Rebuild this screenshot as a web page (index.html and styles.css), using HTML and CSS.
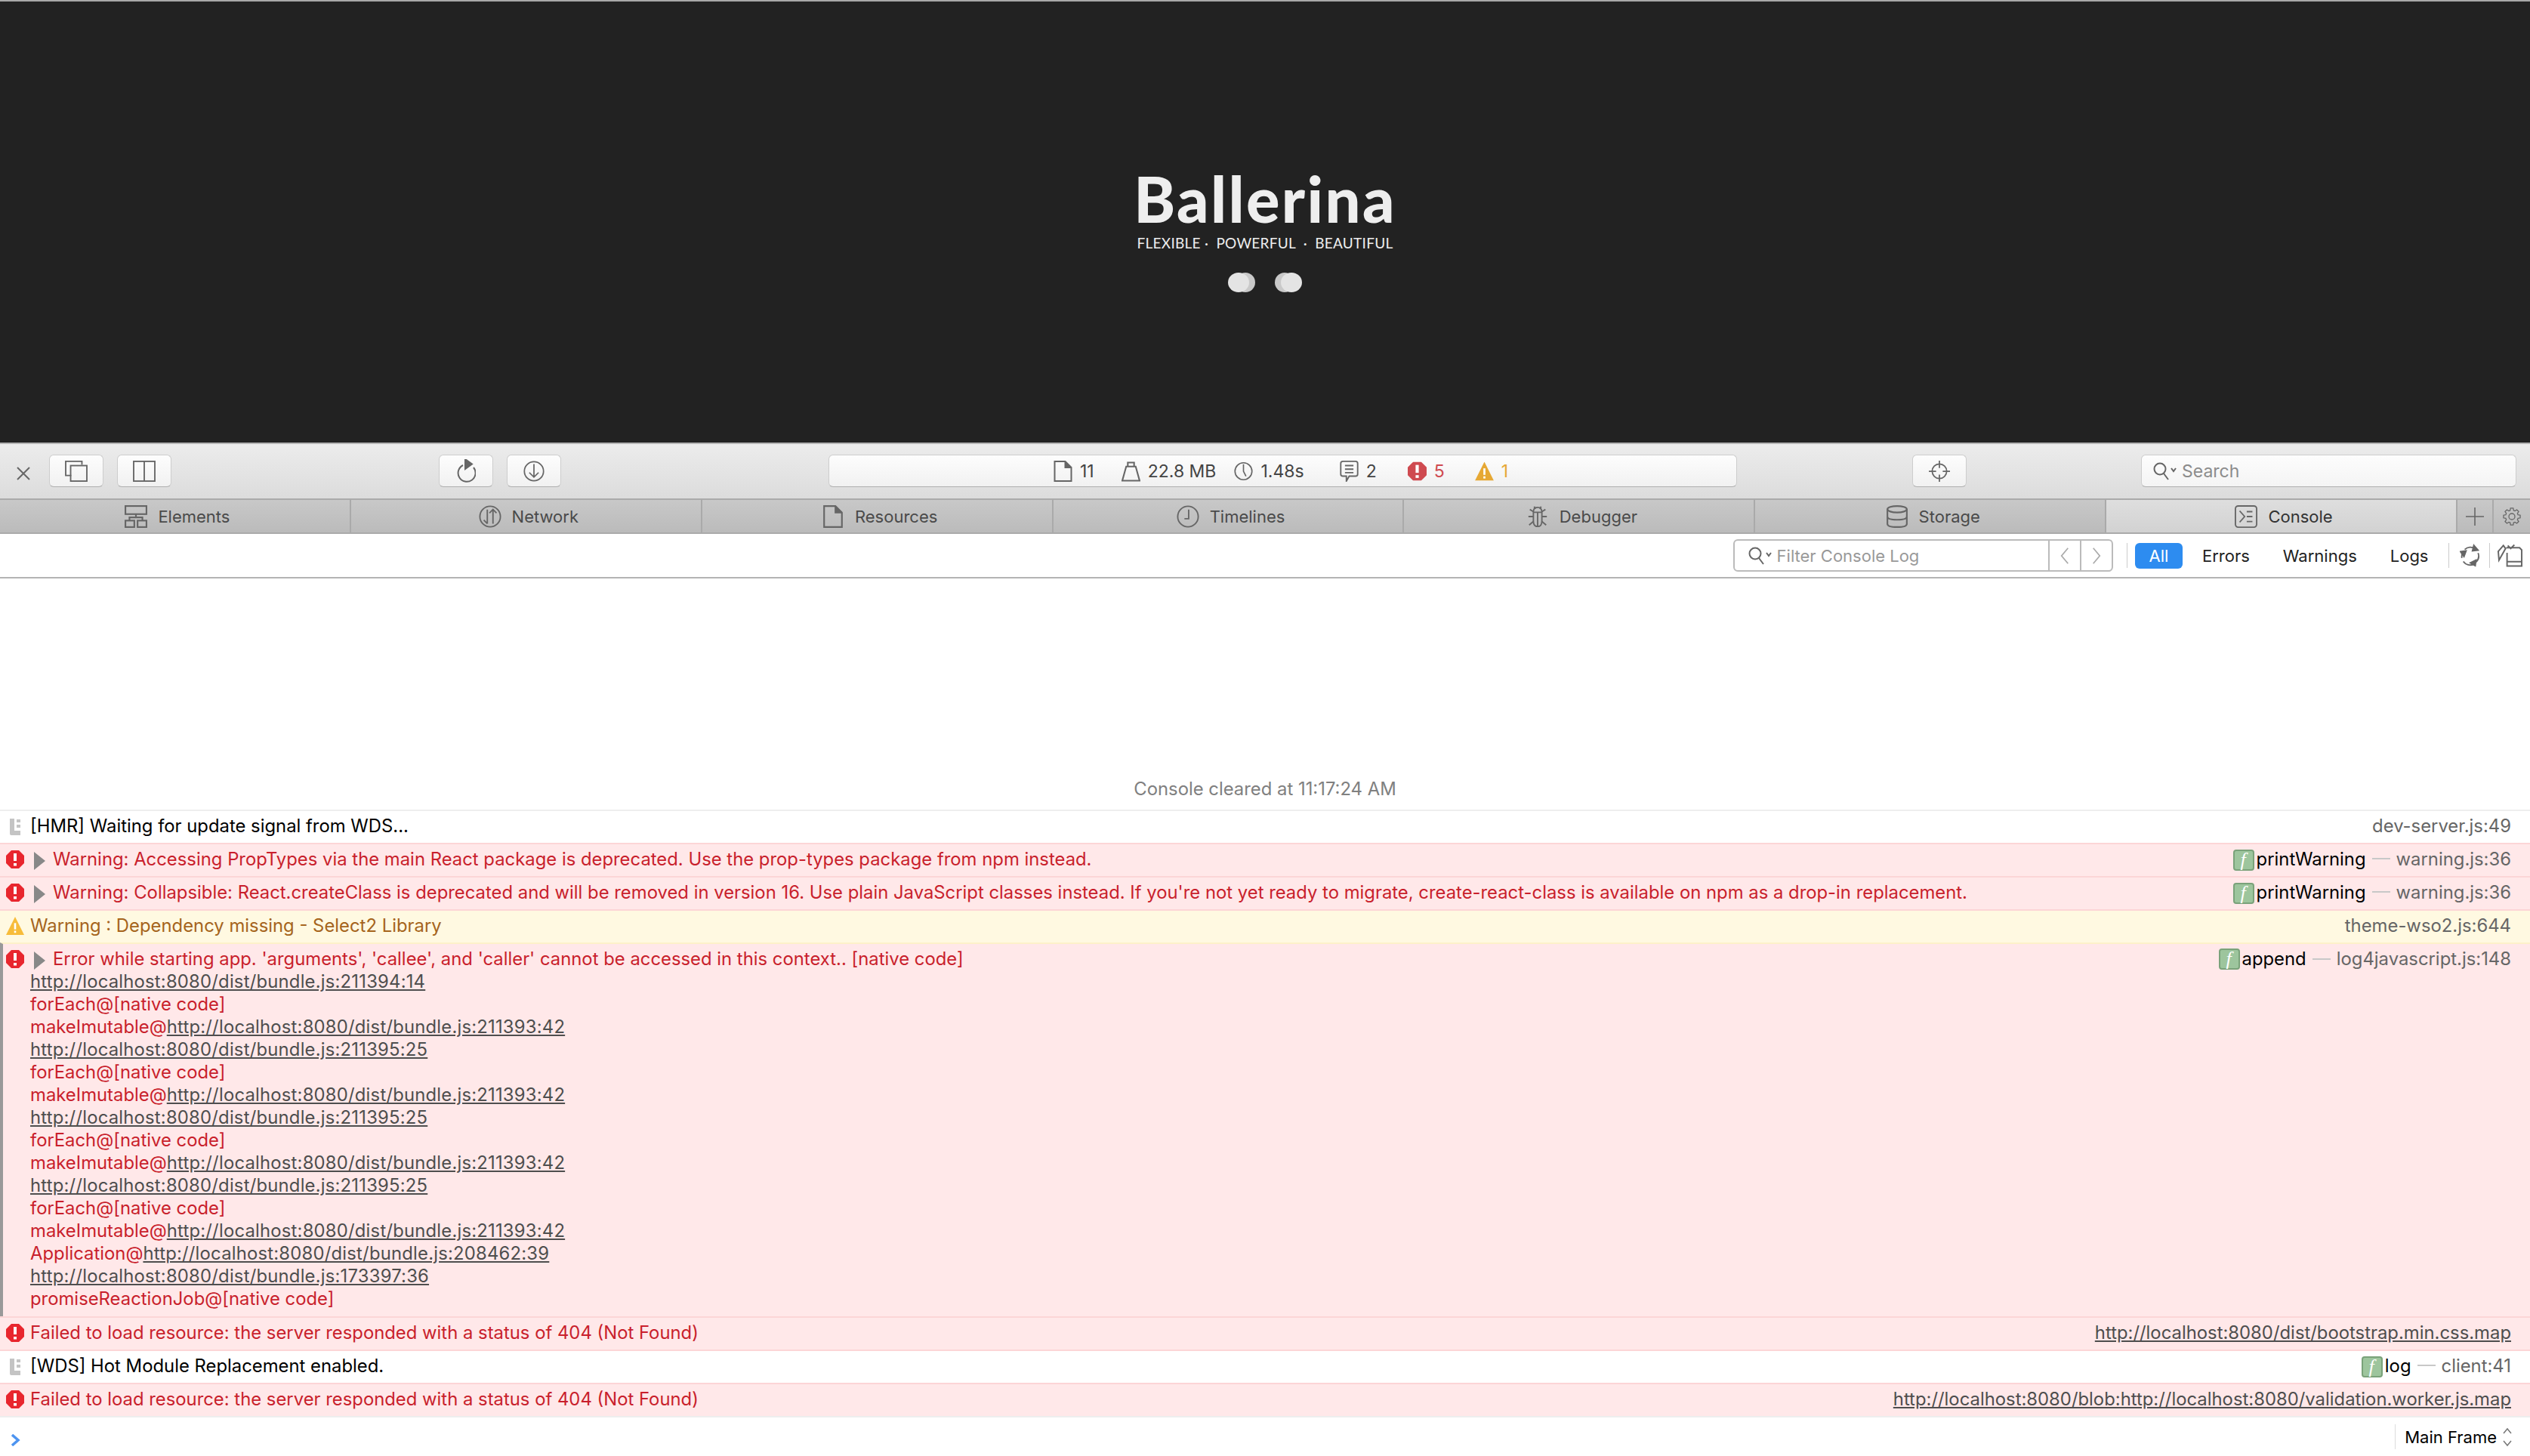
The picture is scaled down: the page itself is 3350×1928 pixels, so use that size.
FILE: index.html
```html
<!DOCTYPE html>
<html lang="en">
<head>
  <meta charset="UTF-8">
  <title>Ballerina - Web Inspector</title>
  <link rel="stylesheet" href="styles.css">
</head>
<body>
  <svg class="defs" width="0" height="0">
    <symbol id="i-err" viewBox="0 0 24 24">
      <polygon points="7,0 17,0 24,7 24,17 17,24 7,24 0,17 0,7" fill="currentColor"/>
      <rect x="10" y="4" width="4" height="10" fill="#fff"/>
      <rect x="10" y="17" width="4" height="3.5" fill="#fff"/>
    </symbol>
    <symbol id="i-warn" viewBox="0 0 26 26">
      <path d="M13 0 L26 26 L0 26 Z" fill="currentColor"/>
      <rect x="11.6" y="9" width="2.8" height="9" fill="#fff"/>
      <rect x="11.6" y="20" width="2.8" height="3" fill="#fff"/>
    </symbol>
    <symbol id="i-log" viewBox="0 0 14 22">
      <path d="M0 0 H6 V16 H14 V22 H2 Q0 22 0 20 Z" fill="#c4c4c4"/>
      <rect x="9" y="1" width="5" height="4" fill="#c4c4c4"/>
      <rect x="9" y="8" width="5" height="4" fill="#c4c4c4"/>
    </symbol>
    <symbol id="i-tri" viewBox="0 0 15 24">
      <path d="M0 0 L15 12 L0 24 Z" fill="#888"/>
    </symbol>
    <symbol id="i-search" viewBox="0 0 32 24">
      <circle cx="9" cy="9" r="7.5" fill="none" stroke="#666" stroke-width="2"/>
      <path d="M14 15 L20 23 M24 8 L27 12 L30 8" fill="none" stroke="#666" stroke-width="2"/>
    </symbol>
  </svg>

  <div class="hero">
    <div class="logo">Ballerina</div>
    <div class="tagline">FLEXIBLE &middot;&nbsp; POWERFUL &nbsp;&middot;&nbsp; BEAUTIFUL</div>
    <div class="dots">
      <span class="dot dot-a"></span>
      <span class="dot dot-b"></span>
    </div>
  </div>

  <div class="toolbar">
    <svg class="close-x ico" viewBox="0 0 18 18"><path d="M1 1 L17 17 M17 1 L1 17"/></svg>
    <button class="tbtn"><svg class="ico" viewBox="0 0 32 30"><path d="M9 21 H1 V1 H24 V6"/><rect x="8" y="7" width="23" height="22"/></svg></button>
    <button class="tbtn"><svg class="ico" viewBox="0 0 32 30"><rect x="1" y="1" width="30" height="28"/><path d="M16 1 V29"/></svg></button>
    <button class="tbtn group-gap"><svg class="ico reload" viewBox="0 0 26 31"><path d="M9 8 A11.5 11.5 0 1 0 23 11"/><path d="M12 0 L21 6.5 L12 13 Z" class="solid"/></svg></button>
    <button class="tbtn"><svg class="ico" viewBox="0 0 32 32"><circle cx="16" cy="16" r="14.5"/><path d="M16 5 V25 M9 18 L16 25 L23 18"/></svg></button>

    <div class="activity">
      <span class="stat"><svg class="ico" viewBox="0 0 24 28"><path d="M1 1 H15 L23 9 V27 H1 Z"/><path d="M15 1 V9 H23" class="solid"/></svg>11</span>
      <span class="stat stat-mem"><svg class="ico" viewBox="0 0 24 26"><path d="M6 7 H18 L23 25 H1 Z"/><path d="M8 7 V2 H16 V7"/></svg>22.8 MB</span>
      <span class="stat stat-time"><svg class="ico" viewBox="0 0 30 30"><circle cx="15" cy="15" r="13.5"/><path d="M15 4 L15 15 L19 23"/></svg>1.48s</span>
      <span class="stat stat-msg"><svg class="ico" viewBox="0 0 26 30"><path d="M4 1 H22 Q25 1 25 4 V19 Q25 22 22 22 H13 L9 29 L9 22 H4 Q1 22 1 19 V4 Q1 1 4 1 Z"/><path d="M7 7 H19 M7 12 H19 M7 17 H19"/></svg>2</span>
      <span class="stat stat-err"><svg class="stat-glyph" viewBox="0 0 24 24"><use href="#i-err"/></svg>5</span>
      <span class="stat stat-warn"><svg class="stat-glyph" viewBox="0 0 26 26"><use href="#i-warn"/></svg>1</span>
    </div>

    <button class="tbtn target-btn"><svg class="ico" viewBox="0 0 32 32"><circle cx="16" cy="16" r="11"/><path d="M16 0 V11 M16 21 V32 M0 16 H11 M21 16 H32"/></svg></button>

    <div class="search"><svg class="search-ico"><use href="#i-search"/></svg>Search</div>
  </div>

  <div class="tabs">
    <div class="tab"><svg class="ico" viewBox="0 0 28 28"><rect x="1" y="1" width="26" height="10"/><rect x="1" y="19" width="11" height="8"/><rect x="16" y="19" width="11" height="8"/><path d="M14 11 V15 M6 19 V15 H22 V19"/></svg>Elements</div>
    <div class="tab"><svg class="ico" viewBox="0 0 32 32"><circle cx="16" cy="16" r="14.5"/><path d="M12 6 V26 M7 21 L12 26 M20 26 V6 M15 11 L20 6 L25 11"/></svg>Network</div>
    <div class="tab"><svg class="ico" viewBox="0 0 24 28"><path d="M1 1 H15 L23 9 V27 H1 Z"/><path d="M15 1 V9 H23" class="solid"/></svg>Resources</div>
    <div class="tab"><svg class="ico" viewBox="0 0 32 32"><circle cx="16" cy="16" r="14.5"/><path d="M17 6 V19 H11"/></svg>Timelines</div>
    <div class="tab"><svg class="ico" viewBox="0 0 28 32"><path d="M8 10 Q8 3 14 3 Q20 3 20 10 V22 Q20 30 14 30 Q8 30 8 22 Z"/><path d="M8 10 H20 M14 10 V30 M9 2 L11 5 M19 2 L17 5 M1 16 H8 M20 16 H27 M8 23 L2 28 M20 23 L26 28 M8 9 L3 6 M20 9 L25 6"/></svg>Debugger</div>
    <div class="tab"><svg class="ico" viewBox="0 0 28 28"><ellipse cx="14" cy="5" rx="12" ry="4"/><path d="M2 5 V23 Q2 27 14 27 Q26 27 26 23 V5 M2 14 Q2 18 14 18 Q26 18 26 14"/></svg>Storage</div>
    <div class="tab tab-on"><svg class="ico" viewBox="0 0 32 32"><rect x="1" y="1" width="30" height="30" rx="4"/><path d="M7 8 L14 16 L7 24 M17 9 H25 M17 16 H25 M17 23 H25"/></svg>Console</div>
    <div class="tab-mini"><svg class="ico" viewBox="0 0 24 24"><path d="M12 0 V24 M0 12 H24"/></svg></div>
    <div class="tab-mini"><svg class="ico" viewBox="0 0 30 30"><polygon points="12.1,4.9 12.8,1.2 17.2,1.2 17.9,4.9 20.1,5.8 23.2,3.7 26.3,6.8 24.2,9.9 25.1,12.1 28.8,12.8 28.8,17.2 25.1,17.9 24.2,20.1 26.3,23.2 23.2,26.3 20.1,24.2 17.9,25.1 17.2,28.8 12.8,28.8 12.1,25.1 9.9,24.2 6.8,26.3 3.7,23.2 5.8,20.1 4.9,17.9 1.2,17.2 1.2,12.8 4.9,12.1 5.8,9.9 3.7,6.8 6.8,3.7 9.9,5.8"/><circle cx="15" cy="15" r="5"/></svg></div>
  </div>

  <div class="filterbar">
    <div class="filter">
      <svg class="search-ico"><use href="#i-search"/></svg>
      <span class="filter-text">Filter Console Log</span>
      <span class="filter-nav"><svg class="ico" viewBox="0 0 14 28"><path d="M12 2 L2 14 L12 26"/></svg></span>
      <span class="filter-nav"><svg class="ico" viewBox="0 0 14 28"><path d="M2 2 L12 14 L2 26"/></svg></span>
    </div>
    <span class="vline"></span>
    <span class="pill pill-on">All</span>
    <span class="pill">Errors</span>
    <span class="pill">Warnings</span>
    <span class="pill">Logs</span>
    <span class="vline vline-b"></span>
    <svg class="ico act" viewBox="0 0 30 32"><path d="M7 7 A12 12 0 0 1 22 6 M26 12 A12 12 0 0 1 23 25 M20 28 A12 12 0 0 1 5 24 M3 19 A12 12 0 0 1 5 10"/><path d="M20 1 L26 8 L18 9 Z M22 30 L15 26 L23 22 Z M1 10 L9 9 L6 17 Z" class="solid"/></svg>
    <span class="vline vline-c"></span>
    <svg class="ico act act-clear" viewBox="0 0 34 32"><path d="M1 10 L8 2 L11 6 L2 22 Z M12 5 H30 L33 8 V30 H13 V12 M14 24 H33 M14 2 L18 6 L23 1"/></svg>
  </div>

  <div class="console">
    <div class="cleared">Console cleared at 11:17:24 AM</div>
    <div class="messages">
      <div class="row row-first">
        <svg class="m-log"><use href="#i-log"/></svg>
        <span class="msg">[HMR] Waiting for update signal from WDS...</span>
        <span class="src">dev-server.js:49</span>
      </div>
      <div class="row err">
        <svg class="m-err"><use href="#i-err"/></svg>
        <svg class="m-tri"><use href="#i-tri"/></svg>
        <span class="msg">Warning: Accessing PropTypes via the main React package is deprecated. Use the prop-types package from npm instead.</span>
        <span class="src"><svg class="fn" viewBox="0 0 28 28"><rect x="1" y="1" width="26" height="26" rx="3"/><text x="13" y="22">f</text></svg><span class="fname">printWarning</span><span class="dash"></span>warning.js:36</span>
      </div>
      <div class="row err">
        <svg class="m-err"><use href="#i-err"/></svg>
        <svg class="m-tri"><use href="#i-tri"/></svg>
        <span class="msg">Warning: Collapsible: React.createClass is deprecated and will be removed in version 16. Use plain JavaScript classes instead. If you're not yet ready to migrate, create-react-class is available on npm as a drop-in replacement.</span>
        <span class="src"><svg class="fn" viewBox="0 0 28 28"><rect x="1" y="1" width="26" height="26" rx="3"/><text x="13" y="22">f</text></svg><span class="fname">printWarning</span><span class="dash"></span>warning.js:36</span>
      </div>
      <div class="row warn">
        <svg class="m-warn"><use href="#i-warn"/></svg>
        <span class="msg">Warning : Dependency missing - Select2 Library</span>
        <span class="src">theme-wso2.js:644</span>
      </div>
      <div class="row err row-stack">
        <svg class="m-err"><use href="#i-err"/></svg>
        <svg class="m-tri"><use href="#i-tri"/></svg>
        <div class="msg">
          <div class="first-line">Error while starting app. 'arguments', 'callee', and 'caller' cannot be accessed in this context.. [native code]</div>
          <div class="stack">
            <div><a>http://localhost:8080/dist/bundle.js:211394:14</a></div>
            <div>forEach@[native code]</div>
            <div>makeImutable@<a>http://localhost:8080/dist/bundle.js:211393:42</a></div>
            <div><a>http://localhost:8080/dist/bundle.js:211395:25</a></div>
            <div>forEach@[native code]</div>
            <div>makeImutable@<a>http://localhost:8080/dist/bundle.js:211393:42</a></div>
            <div><a>http://localhost:8080/dist/bundle.js:211395:25</a></div>
            <div>forEach@[native code]</div>
            <div>makeImutable@<a>http://localhost:8080/dist/bundle.js:211393:42</a></div>
            <div><a>http://localhost:8080/dist/bundle.js:211395:25</a></div>
            <div>forEach@[native code]</div>
            <div>makeImutable@<a>http://localhost:8080/dist/bundle.js:211393:42</a></div>
            <div>Application@<a>http://localhost:8080/dist/bundle.js:208462:39</a></div>
            <div><a>http://localhost:8080/dist/bundle.js:173397:36</a></div>
            <div>promiseReactionJob@[native code]</div>
          </div>
        </div>
        <span class="src"><svg class="fn" viewBox="0 0 28 28"><rect x="1" y="1" width="26" height="26" rx="3"/><text x="13" y="22">f</text></svg><span class="fname">append</span><span class="dash"></span>log4javascript.js:148</span>
      </div>
      <div class="row err">
        <svg class="m-err"><use href="#i-err"/></svg>
        <span class="msg">Failed to load resource: the server responded with a status of 404 (Not Found)</span>
        <span class="src"><a>http://localhost:8080/dist/bootstrap.min.css.map</a></span>
      </div>
      <div class="row">
        <svg class="m-log"><use href="#i-log"/></svg>
        <span class="msg">[WDS] Hot Module Replacement enabled.</span>
        <span class="src"><svg class="fn" viewBox="0 0 28 28"><rect x="1" y="1" width="26" height="26" rx="3"/><text x="13" y="22">f</text></svg><span class="fname">log</span><span class="dash"></span>client:41</span>
      </div>
      <div class="row err">
        <svg class="m-err"><use href="#i-err"/></svg>
        <span class="msg">Failed to load resource: the server responded with a status of 404 (Not Found)</span>
        <span class="src"><a>http://localhost:8080/blob:http://localhost:8080/validation.worker.js.map</a></span>
      </div>
    </div>
    <div class="prompt">
      <svg class="chevron" viewBox="0 0 13 16"><path d="M2 1 L10 8 L2 15"/></svg>
      <div class="frame">Main Frame<svg class="updown" viewBox="0 0 12 26"><path d="M1 8 L6 2 L11 8 M1 18 L6 24 L11 18"/></svg></div>
    </div>
  </div>
</body>
</html>
```
FILE: styles.css
```css
* {
  box-sizing: border-box;
}

html, body {
  margin: 0;
  padding: 0;
}

body {
  width: 3350px;
  height: 1928px;
  display: flex;
  flex-direction: column;
  overflow: hidden;
  font-family: Inter, "Liberation Sans", sans-serif;
  font-size: 23.85px;
  background: #fff;
  color: #000;
}

.defs {
  position: absolute;
}

.ico {
  fill: none;
  stroke: #666;
  stroke-width: 2;
}

.ico .solid {
  fill: #666;
}

/* splash */
.hero {
  height: 586px;
  background: #222;
  border-top: 2px solid #a8a8a8;
  display: flex;
  flex-direction: column;
  align-items: center;
  padding-top: 215px;
  color: #eee;
}

.logo {
  font-family: Lato, sans-serif;
  font-weight: 900;
  font-size: 83px;
  line-height: 92px;
  letter-spacing: 2.4px;
}

.tagline {
  font-family: Lato, sans-serif;
  font-weight: 400;
  font-size: 19px;
  line-height: 24px;
  letter-spacing: 0.27px;
  margin-top: 1px;
}

.dots {
  display: flex;
  gap: 26px;
  margin-top: 26px;
}

.dot {
  width: 36px;
  height: 28px;
  position: relative;
  display: block;
}

.dot::before,
.dot::after {
  content: "";
  position: absolute;
  top: 1px;
  width: 26px;
  height: 26px;
  border-radius: 50%;
}

.dot-a::before {
  right: 0;
  background: #c9c9c9;
}

.dot-a::after {
  left: 0;
  width: 28px;
  background: #e4e4e4;
}

.dot-b::before {
  left: 0;
  background: #c9c9c9;
}

.dot-b::after {
  right: 0;
  width: 28px;
  background: #e4e4e4;
}

/* top toolbar */
.toolbar {
  height: 74px;
  border-top: 2px solid #b4b4b4;
  background: linear-gradient(#ececec, #dcdcdc);
  display: flex;
  align-items: flex-start;
  padding: 14px 0 0 22px;
}

.close-x {
  width: 18px;
  height: 18px;
  margin: 16px 25px 0 0;
}

.tbtn {
  width: 72px;
  height: 43px;
  margin: 0 18px 0 0;
  padding: 0;
  border: 1px solid #cdcdcd;
  border-bottom-color: #b0b0b0;
  border-radius: 6px;
  background: linear-gradient(#fdfdfd, #f1f1f1);
  display: flex;
  align-items: center;
  justify-content: center;
}

.tbtn svg {
  width: 30px;
  height: 28px;
}

.tbtn .reload {
  width: 26px;
  height: 31px;
}

.group-gap {
  margin-left: 336px;
}

.activity {
  width: 1203px;
  height: 43px;
  margin-left: 336px;
  border: 1px solid #cdcdcd;
  border-bottom-color: #b0b0b0;
  border-radius: 6px;
  background: linear-gradient(#fdfdfd, #f1f1f1);
  display: flex;
  align-items: center;
  padding-left: 297px;
  color: #444;
  font-size: 23px;
}

.stat {
  display: flex;
  align-items: center;
  gap: 10px;
  margin-right: 36px;
}

.stat svg {
  width: 25px;
  height: 28px;
}

.stat-mem {
  margin-right: 24px;
}

.stat-time {
  margin-right: 47px;
}

.stat-msg {
  margin-right: 41px;
}

.stat-err {
  color: #cf4a50;
  margin-right: 40px;
}

.stat-warn {
  color: #e6a834;
}

.stat-glyph {
  flex: none;
}

.target-btn {
  margin: 0 0 0 232px;
}

.search {
  width: 497px;
  height: 43px;
  margin-left: 231px;
  border: 1px solid #cdcdcd;
  border-bottom-color: #b0b0b0;
  border-radius: 6px;
  background: linear-gradient(#fdfdfd, #f4f4f4);
  display: flex;
  align-items: center;
  padding-left: 15px;
  color: #8c8c8c;
  font-size: 23px;
}

.search-ico {
  width: 32px;
  height: 24px;
  margin-right: 6px;
  flex: none;
}

/* tab bar */
.tabs {
  height: 47px;
  border-top: 2px solid #aaa;
  border-bottom: 2px solid #aaa;
  background: linear-gradient(#c8c8c8, #bbb);
  display: flex;
  color: #4a4a4a;
  font-size: 22px;
}

.tab {
  width: 465px;
  border-right: 2px solid #aaa;
  display: flex;
  align-items: center;
  justify-content: center;
  gap: 14px;
  padding-left: 7px;
}

.tab svg {
  width: 30px;
  height: 30px;
}

.tab-on {
  background: linear-gradient(#dedede, #d2d2d2);
  color: #333;
}

.tab-mini {
  width: 48px;
  border-right: 2px solid #aaa;
  display: flex;
  align-items: center;
  justify-content: center;
}

.tab-mini:last-child {
  border-right: 0;
}

.tab-mini svg {
  width: 24px;
  height: 26px;
  stroke-width: 1.6;
}

/* console filter row */
.filterbar {
  height: 59px;
  border-bottom: 2px solid #b4b4b4;
  display: flex;
  align-items: center;
  justify-content: flex-end;
  padding-right: 10px;
  font-size: 22px;
  color: #222;
}

.filter {
  width: 503px;
  height: 43px;
  border: 2px solid #bbb;
  border-radius: 6px;
  display: flex;
  align-items: center;
  padding-left: 18px;
  color: #999;
  margin-right: 18px;
}

.filter-text {
  flex: 1;
}

.filter-nav {
  width: 42px;
  height: 100%;
  border-left: 2px solid #bbb;
  display: flex;
  align-items: center;
  justify-content: center;
}

.filter-nav svg {
  width: 12px;
  height: 26px;
  stroke: #aaa;
}

.vline {
  width: 1px;
  height: 33px;
  background: #ccc;
  margin-right: 10px;
}

.pill {
  padding: 0 21.5px;
  height: 34px;
  line-height: 34px;
  border-radius: 6px;
  margin-right: 1px;
}

.pill-on {
  background: #2d8cf0;
  color: #fff;
  padding: 0 19px;
  margin-right: 4px;
}

.vline-b {
  margin: 0 14px 0 4px;
}

.vline-c {
  margin: 0 10px 0 11px;
}

.act {
  width: 28px;
  height: 32px;
}

.act-clear {
  width: 33px;
}

/* log */
.console {
  flex: 1;
  display: flex;
  flex-direction: column;
  min-height: 0;
}

.cleared {
  flex: 1;
  display: flex;
  align-items: flex-end;
  justify-content: center;
  padding-bottom: 13px;
  color: #808080;
}

.row {
  height: 44px;
  border-top: 2px solid #fcd5d6;
  position: relative;
  display: flex;
  align-items: center;
  padding: 0 25px 4px 40px;
  flex: none;
}

.row-first {
  border-top-color: #eee;
}

.err {
  background: #ffe8e9;
  color: #c91f2c;
}

.warn {
  background: #fff9e1;
  color: #a5641c;
}

.warn + .err {
  border-top-color: #fdf1c9;
}

.err .m-tri + .msg {
  margin-left: 30px;
}

.msg {
  flex: 1;
  white-space: nowrap;
}

.src {
  color: #666;
  display: flex;
  align-items: center;
  white-space: nowrap;
}

a {
  color: #4e4e4e;
  text-decoration: underline;
}

.stack a {
  letter-spacing: 0.2px;
}

.fname {
  color: #000;
}

.dash {
  width: 24px;
  height: 2px;
  background: #c8c8c8;
  margin: 0 8px;
}

.fn {
  width: 28px;
  height: 28px;
  margin: 4px 3px 0 0;
}

.fn rect {
  fill: #9dc59d;
  stroke: #7aa27a;
  stroke-width: 2;
}

.fn text {
  fill: #fff;
  font-family: "Liberation Serif", serif;
  font-style: italic;
  font-size: 26px;
  text-anchor: middle;
}

.m-err,
.m-warn,
.m-log,
.m-tri {
  position: absolute;
  top: 8px;
}

.m-err {
  left: 8px;
  width: 24px;
  height: 24px;
  color: #e8262e;
}

.m-warn {
  left: 8px;
  width: 24px;
  height: 24px;
  color: #f7bc3a;
}

.m-log {
  left: 13px;
  top: 10px;
  width: 14px;
  height: 22px;
}

.m-tri {
  left: 45px;
  top: 10px;
  width: 15px;
  height: 24px;
}

.row-stack {
  height: 495px;
  align-items: flex-start;
  padding-top: 5px;
  border-left: 4px solid #999;
  padding-left: 36px;
  line-height: 30px;
}

.row-stack .m-err,
.row-stack .m-tri {
  margin-left: -4px;
}

.stack {
  margin-left: -30px;
}

.row-stack .src {
  height: 30px;
}

.row-stack .fn {
  margin-top: 0;
}

.prompt {
  flex: none;
  height: 53px;
  border-top: 2px solid #eee;
  display: flex;
  align-items: center;
  justify-content: space-between;
  padding-left: 14px;
}

.chevron {
  width: 13px;
  height: 16px;
  margin-top: 8px;
  fill: none;
  stroke: #4d94f0;
  stroke-width: 3.5;
}

.frame {
  height: 33px;
  border-left: 1px solid #ddd;
  padding: 0 24px 0 12px;
  display: flex;
  align-items: center;
  gap: 8px;
  font-size: 22px;
}

.updown {
  width: 12px;
  height: 26px;
  fill: none;
  stroke: #777;
  stroke-width: 1.5;
}
```
